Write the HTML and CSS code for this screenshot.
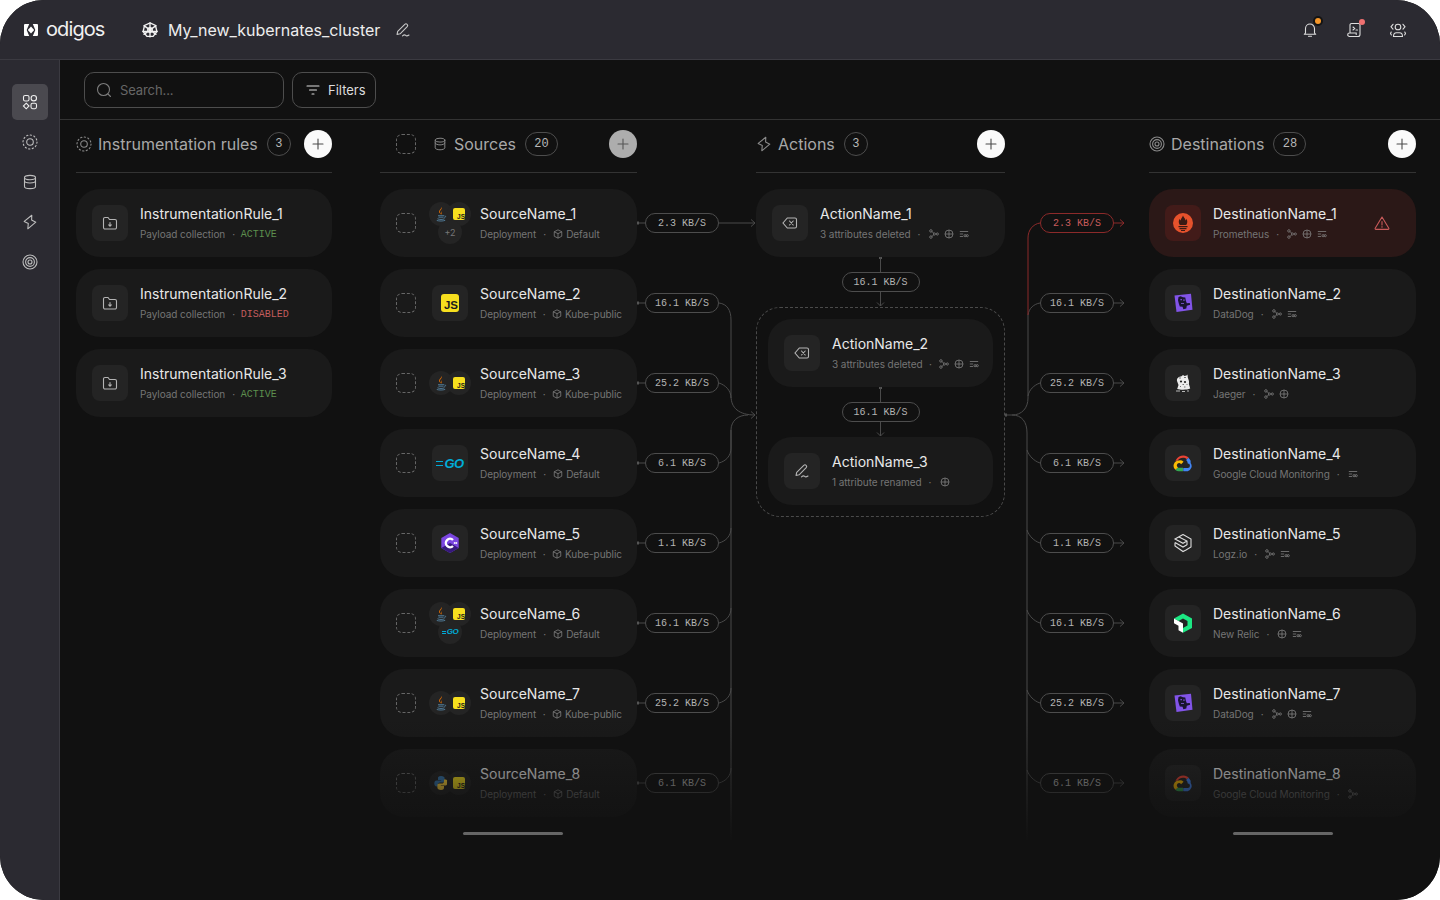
FILE: index.html
```html
<!DOCTYPE html>
<html lang="en">
<head>
<meta charset="utf-8">
<title>Odigos</title>
<link rel="stylesheet" href="styles.css">
</head>
<body>
<svg class="defs" xmlns="http://www.w3.org/2000/svg">
  <symbol id="i-overview" viewBox="0 0 16 16"><rect x="1.5" y="1.5" width="5.5" height="5.5" rx="1.6"/><circle cx="11.8" cy="4.2" r="2.7"/><path d="M4.2 9.2 7 12 4.2 14.8 1.4 12Z"/><rect x="9" y="9.2" width="5.5" height="5.5" rx="1.6"/></symbol>
  <symbol id="i-rule" viewBox="0 0 16 16"><circle cx="8" cy="8" r="3.300"/><circle cx="8" cy="8" r="7" stroke-dasharray="1.300 2.370"/></symbol>
  <symbol id="i-db" viewBox="0 0 16 16"><ellipse cx="8" cy="3.6" rx="5.5" ry="2.2"/><path d="M2.5 3.6v8.8c0 1.2 2.5 2.2 5.5 2.2s5.500-1 5.500-2.200V3.600M2.500 6.800c0 1.200 2.500 2.200 5.500 2.200s5.500-1 5.500-2.200"/></symbol>
  <symbol id="i-bolt" viewBox="0 0 16 16"><path d="M9.800 1.200 2.200 7.400l4.100 2L5.800 14.800l8-6.600-4.200-2.100Z" stroke-linejoin="round"/></symbol>
  <symbol id="i-target" viewBox="0 0 16 16"><circle cx="8" cy="8" r="7"/><circle cx="8" cy="8" r="4.400"/><circle cx="8" cy="8" r="2"/></symbol>
  <symbol id="i-search" viewBox="0 0 16 16"><circle cx="7.500" cy="7.500" r="6"/><path d="m12 12 2.500 2.500"/></symbol>
  <symbol id="i-filter" viewBox="0 0 16 16"><path d="M2 4h12M4.500 8h7M7 12h2"/></symbol>
  <symbol id="i-plus" viewBox="0 0 16 16"><path d="M8 3v10M3 8h10"/></symbol>
  <symbol id="i-folder" viewBox="0 0 16 16"><path d="M1.500 4a1.500 1.500 0 0 1 1.500-1.500h3l1.500 2H13A1.500 1.500 0 0 1 14.500 6v6.500A1.500 1.500 0 0 1 13 14H3a1.500 1.500 0 0 1-1.500-1.500Z"/><path d="M8 7.500v3.500M6.700 9.900 8 11.200l1.300-1.300"/></symbol>
  <symbol id="i-back" viewBox="0 0 16 16"><path d="M5.300 3H13a1.500 1.500 0 0 1 1.500 1.500v7A1.500 1.500 0 0 1 13 13H5.300L1 8Z"/><path d="m7.500 6 3.700 4M11.200 6l-3.700 4"/></symbol>
  <symbol id="i-pen" viewBox="0 0 16 16"><path d="M2 12.500 2.700 9.400 9.800 2.300a1.700 1.700 0 0 1 2.400 2.400L5.100 11.800Z" stroke-linejoin="round"/><path d="M7.500 13.800c1.500-1.300 2.300-1.300 3.200-.4s1.800.6 3.300-.4"/></symbol>
  <symbol id="i-cube" viewBox="0 0 12 12"><path d="M6 1 10.500 3.300v5.400L6 11 1.500 8.700V3.300Z"/><path d="M1.500 3.300 6 5.600l4.500-2.300M6 5.600V11"/></symbol>
  <symbol id="i-trace" viewBox="0 0 12 12"><circle cx="2.300" cy="2.300" r="1.500"/><circle cx="2.300" cy="9.700" r="1.500"/><circle cx="6.500" cy="6" r="1.300"/><circle cx="10" cy="6" r="1.300"/><path d="M3.700 3 5.500 5M3.700 9 5.500 7"/></symbol>
  <symbol id="i-globe" viewBox="0 0 12 12"><circle cx="6" cy="6" r="4.800"/><path d="M1.200 6h9.600M6 1.200v9.600"/></symbol>
  <symbol id="i-slide" viewBox="0 0 12 12"><path d="M1 3h10M1 6h4M1 9h4"/><circle cx="7.300" cy="8" r="1.300"/><circle cx="9.900" cy="8" r="1.300"/></symbol>
  <symbol id="i-warn" viewBox="0 0 16 16"><path d="M8 2 14.800 13.200a.8.800 0 0 1-.7 1.200H1.900a.8.800 0 0 1-.7-1.200Z" stroke-linejoin="round"/><path d="M8 6.500v3.500M8 11.600v.6"/></symbol>
  <symbol id="i-bell" viewBox="0 0 16 16"><path d="M3.500 11V6.500a4.500 4.500 0 0 1 9 0V11l1.200 1.300H2.300Z" stroke-linejoin="round"/><path d="M6.500 14.300h3"/></symbol>
  <symbol id="i-script" viewBox="0 0 16 16"><path d="M4 11V3a1.500 1.500 0 0 1 1.500-1.500h7A1.500 1.500 0 0 1 14 3v9.500a2 2 0 0 1-2 2H3.500A1.800 1.800 0 0 1 1.700 12.700c0-1 .8-1.700 1.800-1.700h6.700v1.500"/><path d="m7 5 1.700 1.500L7 8M10 8h1.500"/></symbol>
  <symbol id="i-users" viewBox="0 0 16 16"><circle cx="8" cy="5" r="2.800"/><path d="M3.500 14.500c0-2.500 1.500-3.700 3-3.700h3c1.500 0 3 1.200 3 3.700Z"/><path d="M3 2.300 1 4.800l2 2.400M13 2.300l2 2.500-2 2.400M1.200 10 .5 11.500l.9 1.500M14.800 10l.7 1.500-.9 1.500"/></symbol>
  <symbol id="i-helm" viewBox="0 0 16 16"><path d="M8 .9 13.500 3.500 14.900 9.500 11.100 14.300H4.900L1.100 9.500 2.500 3.500Z"/><circle cx="8" cy="8" r="2.300"/><path d="M8 .9v14M2 3.600l12 8.800M14 3.600 2 12.400M.9 9.500h14.200"/></symbol>
  <symbol id="i-logo" viewBox="0 0 14 12"><path fill-rule="evenodd" d="M1 0H5.200L2.700 6 5.200 12H1A1 1 0 0 1 0 11V1A1 1 0 0 1 1 0ZM8.800 0H13a1 1 0 0 1 1 1v10a1 1 0 0 1-1 1H8.800l2.500-6ZM7 2.500 10.200 6 7 9.500 3.800 6Z"/></symbol>
  <symbol id="l-java" viewBox="0 0 16 16"><path d="M8.700 1C9.800 3 6.800 4 7 6c.1 1 1 1.500 1 2.500-.8-.8-2.400-1.700-1.800-3.500C6.700 3.500 8.600 2.800 8.700 1Z" fill="#e76f00"/><path d="M10.500 4c-1.500 1-2.400 1.600-1.600 3.200.3.600 0 1.200-.6 1.500.8-1.300-.9-2 .2-3.300.5-.6 1.200-.9 2-1.400Z" fill="#e76f00"/><path d="M5 9.700h6M5.500 11.200h5M4.500 12.800c2 .9 5 .9 7 0M11.500 10c1.500-.3 1.500 1.300-.2 1.700M3.800 14.500c2.500.7 6 .7 8.400-.1" fill="none" stroke="#5382a1" stroke-width=".9"/></symbol>
  <symbol id="l-python" viewBox="0 0 16 16"><path d="M8 1C5.500 1 5 2 5 3.200V5h3.200v.6H3.500C2.200 5.600 1.300 6.800 1.300 8.500s.9 2.900 2.200 2.900H5V9.500c0-1.200 1-2.100 2.200-2.100h2.700c1 0 1.700-.8 1.700-1.800V3.200C11.600 2 10.400 1 8 1Z" fill="#3776ab"/><path d="M8 15c2.500 0 3-1 3-2.200V11H7.800v-.6h4.700c1.300 0 2.200-1.200 2.200-2.900s-.9-2.900-2.200-2.900H11v1.900c0 1.200-1 2.100-2.200 2.100H6.100c-1 0-1.700.8-1.700 1.800v2.400C4.400 14 5.600 15 8 15Z" fill="#ffd43b"/></symbol>
  <symbol id="l-cs" viewBox="0 0 20 20"><path d="M10 0 18.700 5v10L10 20 1.300 15V5Z" fill="#7b46e0"/><path d="M10 10 18.700 15 10 20 1.300 15Z" fill="#36197a"/><path d="M13 7a4.200 4.200 0 1 0 0 6" fill="none" stroke="#fff" stroke-width="2.400"/><path d="M14.500 9v2M16.500 9v2M13.800 9.500h3.400M13.800 10.500h3.400" stroke="#fff" stroke-width=".6"/></symbol>
  <symbol id="l-dd" viewBox="0 0 20 20"><path d="M1.500 2.500 18 .8 19.500 16.800 3.500 19Z" fill="#8254e8"/><path d="M5.500 4 7.500 3.200 10 4.200l2.300.3.500 3 1 2.700 3-.3.300 1.800-3.300 1-.5 2.800-3 .8-.7-2.600-2.800-.3-1-3-.8-3.200Z" fill="#191530"/><path d="M7.500 6h1.300v1.300H7.500ZM10.300 6.500h1.300v1.300h-1.300ZM8 10h3v.8H8Z" fill="#8a60ea"/></symbol>
  <symbol id="l-jaeger" viewBox="0 0 20 20"><path d="M4 8C3.500 5 6 3.500 8.500 3.200L10 2l1.500 1 2-.5 1 -1 .3 3 1 3c.4 1.200.2 2.500.1 3.500l1.300 4.500c-3 1.500-9.500 1.500-13 .5L5.500 12Z" fill="#ececec"/><circle cx="8" cy="8.500" r="1.100" fill="#222"/><circle cx="12" cy="9" r="1.100" fill="#222"/><path d="M6 5h2M11 4.500h2M9.500 11.500h1.500M7 13.500h1M11 14h1.500M13.500 11.500h1" stroke="#555" stroke-width=".8"/><path d="M3 18h4M9 18.500h3M14 18h2" stroke="#ddd" stroke-width=".8"/></symbol>
  <symbol id="l-gcp" viewBox="1 .5 17.800 14.500"><path d="M13.300 4.500 15 2.800A7.400 7.400 0 0 0 3.200 6l2.200-.4c1-2.400 5.500-3.500 7.900-1.100Z" fill="#ea4335"/><path d="M16.700 5.700a7.300 7.300 0 0 0-2-2.700l-2 2a3.700 3.700 0 0 1 1.400 3v.3a2 2 0 0 1 0 4h-3.700l-.3.400v2l.3.300h3.700a4.700 4.700 0 0 0 2.600-7.300Z" fill="#4285f4"/><path d="M6.200 15h3.700v-3H6.200a2 2 0 0 1-.8-.2l-.6.100-1.500 1.500-.1.500A4.700 4.700 0 0 0 6.200 15Z" fill="#34a853"/><path d="M6.200 5.500a4.700 4.700 0 0 0-3 8.300l2.300-2.200a2 2 0 1 1 2.700-2.700l2.200-2.300a4.700 4.700 0 0 0-4.200-1.100Z" fill="#fbbc05"/></symbol>
  <symbol id="l-logz" viewBox="0 0 20 20"><path d="M10 1.500 18 6v8l-5 3M10 1.500 2 6l8 4.300 4-2.300M2 9.500l8 4.500 4-2.300M2 9.500V13l8 5.500 3-1.500M6 4l8 4v4" fill="none" stroke="#ddd" stroke-width="1.100"/></symbol>
  <symbol id="l-nr" viewBox="0 0 20 20"><path d="M10 .5 19 5.500V15L10 19.800V15L14.500 12.500V8L10 5.500 5.500 8 1 5.500Z" fill="#1ce783"/><path d="M1 5.500 10 10.500V19.800L5.500 17.200V12.800L1 10.300Z" fill="#fff"/></symbol>
  <symbol id="l-prom" viewBox="0 0 20 20"><circle cx="10" cy="10" r="10" fill="#e6522c"/><path d="M10 2.500c.5 2 2.500 2.800 2.500 5 .6-.5.800-1.100.9-1.800 1.200 2 1.300 4-.2 6.300H6.800C5.300 9.700 5.500 7.800 6.700 5.800c.1.800.3 1.300.9 1.800C7.700 5.500 9.500 4.500 10 2.500Z" fill="#3a1a14"/><path d="M5.500 13h9v1.200h-9ZM6.500 15h7v1.200h-7ZM8 17h4v1H8Z" fill="#3a1a14"/></symbol>
</svg>

<div class="app">
  <header class="topbar">
    <div class="brand"><svg class="brand-mark"><use href="#i-logo"/></svg><span class="brand-name">odigos</span></div>
    <svg class="ico helm"><use href="#i-helm"/></svg>
    <span class="cluster">My_new_kubernates_cluster</span>
    <svg class="ico edit"><use href="#i-pen"/></svg>
    <div class="top-actions">
      <span class="top-btn"><svg class="ico"><use href="#i-bell"/></svg><i class="badge badge-orange"></i></span>
      <span class="top-btn"><svg class="ico"><use href="#i-script"/></svg><i class="badge badge-red"></i></span>
      <span class="top-btn"><svg class="ico"><use href="#i-users"/></svg></span>
    </div>
  </header>

  <nav class="sidebar">
    <span class="nav-btn active"><svg class="ico"><use href="#i-overview"/></svg></span>
    <span class="nav-btn"><svg class="ico"><use href="#i-rule"/></svg></span>
    <span class="nav-btn"><svg class="ico"><use href="#i-db"/></svg></span>
    <span class="nav-btn"><svg class="ico"><use href="#i-bolt"/></svg></span>
    <span class="nav-btn"><svg class="ico"><use href="#i-target"/></svg></span>
  </nav>

  <main class="main">
    <div class="toolbar">
      <div class="search"><svg class="ico"><use href="#i-search"/></svg><span>Search...</span></div>
      <div class="filters"><svg class="ico"><use href="#i-filter"/></svg><span>Filters</span></div>
    </div>

    <div class="board">
      <svg class="wires" viewBox="60 120 1380 780" xmlns="http://www.w3.org/2000/svg">
        <path d="M637 223H645M637 303H645M637 383H645M637 463H645M637 543H645M637 623H645M637 703H645M637 783H645"/>
        <path class="cap" d="M637 223h2M637 303h2M637 383h2M637 463h2M637 543h2M637 623h2M637 703h2M637 783h2M1005 415h2M880.500 257v2M880.500 387v2"/>
        <path d="M719 223H755M751 219.500l4 3.500-4 3.500"/>
        <path d="M719 303C727 304 731 310 731 320V396C731 408 739 415 755 415M751 411.500l4 3.500-4 3.500"/>
        <path d="M719 383C725 385 731 390 731 398"/>
        <path d="M719 463C726 461 731 456 731 448V430C731 421 738 415 748 415"/>
        <path d="M719 543C726 541 731 536 731 528M719 623C726 621 731 616 731 608M719 703C726 701 731 696 731 688M719 783C726 781 731 776 731 768"/>
        <path d="M731 840V430"/>
        <path d="M880.500 257V272M880.500 292V306M877 302.500l3.500 3.500 3.500-3.500M880.500 387V402M880.500 422V436M877 432.500l3.500 3.500 3.500-3.500"/>
        <path d="M1005 415H1012C1022 415 1028 408 1028 398V315C1029 308 1034 304 1040 303M1028 396C1029 390 1034 385 1040 383"/>
        <path d="M1012 415C1022 415 1027 422 1027 433V840"/>
        <path d="M1027 450C1029 456 1034 461 1040 463M1027 530C1029 536 1034 541 1040 543M1027 610C1029 616 1034 621 1040 623M1027 690C1029 696 1034 701 1040 703M1027 770C1029 776 1034 781 1040 783"/>
        <path d="M1114 303H1124M1120 299.500l4 3.500-4 3.500M1114 383H1124M1120 379.500l4 3.500-4 3.500M1114 463H1124M1120 459.500l4 3.500-4 3.500M1114 543H1124M1120 539.500l4 3.500-4 3.500M1114 623H1124M1120 619.500l4 3.500-4 3.500M1114 703H1124M1120 699.500l4 3.500-4 3.500M1114 783H1124M1120 779.500l4 3.500-4 3.500"/>
        <path class="red" d="M1028 315V238C1028 230 1033 224 1040 223M1114 223H1124M1120 219.500l4 3.500-4 3.500"/>
      </svg>

      <section class="col col-rules">
        <div class="col-head">
          <svg class="ico head-ico"><use href="#i-rule"/></svg><h2>Instrumentation rules</h2><span class="count">3</span>
          <span class="add"><svg class="ico"><use href="#i-plus"/></svg></span>
        </div>
        <div class="cards">
          <article class="card"><span class="tile"><svg class="ico"><use href="#i-folder"/></svg></span><div class="body"><div class="name">InstrumentationRule_1</div><div class="sub">Payload collection<i class="dot">·</i><span class="status ok">ACTIVE</span></div></div></article>
          <article class="card"><span class="tile"><svg class="ico"><use href="#i-folder"/></svg></span><div class="body"><div class="name">InstrumentationRule_2</div><div class="sub">Payload collection<i class="dot">·</i><span class="status off">DISABLED</span></div></div></article>
          <article class="card"><span class="tile"><svg class="ico"><use href="#i-folder"/></svg></span><div class="body"><div class="name">InstrumentationRule_3</div><div class="sub">Payload collection<i class="dot">·</i><span class="status ok">ACTIVE</span></div></div></article>
        </div>
      </section>

      <section class="col col-sources">
        <div class="col-head head-check">
          <span class="check"></span><svg class="ico head-ico small"><use href="#i-db"/></svg><h2>Sources</h2><span class="count wide">20</span>
          <span class="add add-muted"><svg class="ico"><use href="#i-plus"/></svg></span>
        </div>
        <div class="cards">
          <article class="card"><span class="check"></span><span class="stack"><span class="bubble"><svg class="logo16"><use href="#l-java"/></svg></span><span class="bubble"><span class="js js-s">JS</span></span><span class="bubble more">+2</span></span><div class="body"><div class="name">SourceName_1</div><div class="sub">Deployment<i class="dot">·</i><svg class="mi"><use href="#i-cube"/></svg><span class="ns">Default</span></div></div></article>
          <article class="card"><span class="check"></span><span class="tile"><span class="js">JS</span></span><div class="body"><div class="name">SourceName_2</div><div class="sub">Deployment<i class="dot">·</i><svg class="mi"><use href="#i-cube"/></svg><span class="ns">Kube-public</span></div></div></article>
          <article class="card"><span class="check"></span><span class="stack"><span class="bubble"><svg class="logo16"><use href="#l-java"/></svg></span><span class="bubble"><span class="js js-s">JS</span></span></span><div class="body"><div class="name">SourceName_3</div><div class="sub">Deployment<i class="dot">·</i><svg class="mi"><use href="#i-cube"/></svg><span class="ns">Kube-public</span></div></div></article>
          <article class="card"><span class="check"></span><span class="tile"><span class="go"><span class="go-lines"></span>GO</span></span><div class="body"><div class="name">SourceName_4</div><div class="sub">Deployment<i class="dot">·</i><svg class="mi"><use href="#i-cube"/></svg><span class="ns">Default</span></div></div></article>
          <article class="card"><span class="check"></span><span class="tile"><svg class="logo20"><use href="#l-cs"/></svg></span><div class="body"><div class="name">SourceName_5</div><div class="sub">Deployment<i class="dot">·</i><svg class="mi"><use href="#i-cube"/></svg><span class="ns">Kube-public</span></div></div></article>
          <article class="card"><span class="check"></span><span class="stack"><span class="bubble"><svg class="logo16"><use href="#l-java"/></svg></span><span class="bubble"><span class="js js-s">JS</span></span><span class="bubble"><span class="go go-s"><span class="go-lines"></span>GO</span></span></span><div class="body"><div class="name">SourceName_6</div><div class="sub">Deployment<i class="dot">·</i><svg class="mi"><use href="#i-cube"/></svg><span class="ns">Default</span></div></div></article>
          <article class="card"><span class="check"></span><span class="stack"><span class="bubble"><svg class="logo16"><use href="#l-java"/></svg></span><span class="bubble"><span class="js js-s">JS</span></span></span><div class="body"><div class="name">SourceName_7</div><div class="sub">Deployment<i class="dot">·</i><svg class="mi"><use href="#i-cube"/></svg><span class="ns">Kube-public</span></div></div></article>
          <article class="card"><span class="check"></span><span class="stack"><span class="bubble"><svg class="logo16"><use href="#l-python"/></svg></span><span class="bubble"><span class="js js-s">JS</span></span></span><div class="body"><div class="name">SourceName_8</div><div class="sub">Deployment<i class="dot">·</i><svg class="mi"><use href="#i-cube"/></svg><span class="ns">Default</span></div></div></article>
        </div>
        <div class="thumb thumb-src"></div>
      </section>

      <div class="flow flow-in">
        <div class="flow-row"><span class="pill">2.3 KB/S</span></div>
        <div class="flow-row"><span class="pill">16.1 KB/S</span></div>
        <div class="flow-row"><span class="pill">25.2 KB/S</span></div>
        <div class="flow-row"><span class="pill">6.1 KB/S</span></div>
        <div class="flow-row"><span class="pill">1.1 KB/S</span></div>
        <div class="flow-row"><span class="pill">16.1 KB/S</span></div>
        <div class="flow-row"><span class="pill">25.2 KB/S</span></div>
        <div class="flow-row"><span class="pill">6.1 KB/S</span></div>
      </div>

      <section class="col col-actions">
        <div class="col-head">
          <svg class="ico head-ico"><use href="#i-bolt"/></svg><h2>Actions</h2><span class="count">3</span>
          <span class="add"><svg class="ico"><use href="#i-plus"/></svg></span>
        </div>
        <div class="action-stack">
          <article class="card"><span class="tile"><svg class="ico"><use href="#i-back"/></svg></span><div class="body"><div class="name">ActionName_1</div><div class="sub">3 attributes deleted<i class="dot">·</i><span class="signals"><svg class="mi"><use href="#i-trace"/></svg><svg class="mi"><use href="#i-globe"/></svg><svg class="mi"><use href="#i-slide"/></svg></span></div></div></article>
          <div class="v-link v-link-top"><span class="pill pill-v">16.1 KB/S</span></div>
          <div class="group">
            <article class="card"><span class="tile"><svg class="ico"><use href="#i-back"/></svg></span><div class="body"><div class="name">ActionName_2</div><div class="sub">3 attributes deleted<i class="dot">·</i><span class="signals"><svg class="mi"><use href="#i-trace"/></svg><svg class="mi"><use href="#i-globe"/></svg><svg class="mi"><use href="#i-slide"/></svg></span></div></div></article>
            <div class="v-link"><span class="pill pill-v">16.1 KB/S</span></div>
            <article class="card"><span class="tile"><svg class="ico"><use href="#i-pen"/></svg></span><div class="body"><div class="name">ActionName_3</div><div class="sub">1 attribute renamed<i class="dot">·</i><span class="signals"><svg class="mi"><use href="#i-globe"/></svg></span></div></div></article>
          </div>
        </div>
      </section>

      <div class="flow flow-out">
        <div class="flow-row"><span class="pill pill-red">2.3 KB/S</span></div>
        <div class="flow-row"><span class="pill">16.1 KB/S</span></div>
        <div class="flow-row"><span class="pill">25.2 KB/S</span></div>
        <div class="flow-row"><span class="pill">6.1 KB/S</span></div>
        <div class="flow-row"><span class="pill">1.1 KB/S</span></div>
        <div class="flow-row"><span class="pill">16.1 KB/S</span></div>
        <div class="flow-row"><span class="pill">25.2 KB/S</span></div>
        <div class="flow-row"><span class="pill">6.1 KB/S</span></div>
      </div>

      <section class="col col-dest">
        <div class="col-head">
          <svg class="ico head-ico"><use href="#i-target"/></svg><h2>Destinations</h2><span class="count wide">28</span>
          <span class="add"><svg class="ico"><use href="#i-plus"/></svg></span>
        </div>
        <div class="cards">
          <article class="card card-error"><span class="tile"><svg class="logo20"><use href="#l-prom"/></svg></span><div class="body"><div class="name">DestinationName_1</div><div class="sub">Prometheus<i class="dot">·</i><span class="signals"><svg class="mi"><use href="#i-trace"/></svg><svg class="mi"><use href="#i-globe"/></svg><svg class="mi"><use href="#i-slide"/></svg></span></div></div><svg class="ico warn"><use href="#i-warn"/></svg></article>
          <article class="card"><span class="tile"><svg class="logo20"><use href="#l-dd"/></svg></span><div class="body"><div class="name">DestinationName_2</div><div class="sub">DataDog<i class="dot">·</i><span class="signals"><svg class="mi"><use href="#i-trace"/></svg><svg class="mi"><use href="#i-slide"/></svg></span></div></div></article>
          <article class="card"><span class="tile"><svg class="logo20"><use href="#l-jaeger"/></svg></span><div class="body"><div class="name">DestinationName_3</div><div class="sub">Jaeger<i class="dot">·</i><span class="signals"><svg class="mi"><use href="#i-trace"/></svg><svg class="mi"><use href="#i-globe"/></svg></span></div></div></article>
          <article class="card"><span class="tile"><svg class="logo20"><use href="#l-gcp"/></svg></span><div class="body"><div class="name">DestinationName_4</div><div class="sub">Google Cloud Monitoring<i class="dot">·</i><span class="signals"><svg class="mi"><use href="#i-slide"/></svg></span></div></div></article>
          <article class="card"><span class="tile"><svg class="logo20"><use href="#l-logz"/></svg></span><div class="body"><div class="name">DestinationName_5</div><div class="sub">Logz.io<i class="dot">·</i><span class="signals"><svg class="mi"><use href="#i-trace"/></svg><svg class="mi"><use href="#i-slide"/></svg></span></div></div></article>
          <article class="card"><span class="tile"><svg class="logo20"><use href="#l-nr"/></svg></span><div class="body"><div class="name">DestinationName_6</div><div class="sub">New Relic<i class="dot">·</i><span class="signals"><svg class="mi"><use href="#i-globe"/></svg><svg class="mi"><use href="#i-slide"/></svg></span></div></div></article>
          <article class="card"><span class="tile"><svg class="logo20"><use href="#l-dd"/></svg></span><div class="body"><div class="name">DestinationName_7</div><div class="sub">DataDog<i class="dot">·</i><span class="signals"><svg class="mi"><use href="#i-trace"/></svg><svg class="mi"><use href="#i-globe"/></svg><svg class="mi"><use href="#i-slide"/></svg></span></div></div></article>
          <article class="card"><span class="tile"><svg class="logo20"><use href="#l-gcp"/></svg></span><div class="body"><div class="name">DestinationName_8</div><div class="sub">Google Cloud Monitoring<i class="dot">·</i><span class="signals"><svg class="mi"><use href="#i-trace"/></svg></span></div></div></article>
        </div>
        <div class="thumb thumb-dest"></div>
      </section>

      <div class="fade"></div>
    </div>
  </main>
</div>
</body>
</html>
```
FILE: styles.css
```css
* { box-sizing: border-box; }
html, body { margin: 0; height: 100%; background: #fff; }
body { font-family: Inter, "Noto Sans", sans-serif; color: #e6e6e6; overflow: hidden; }
h2 { margin: 0; font-weight: 400; }
i { font-style: normal; }
.defs { position: absolute; width: 0; height: 0; }
.ico { width: 16px; height: 16px; flex: none; fill: none; stroke: currentColor; stroke-width: 1.1; stroke-linecap: round; }

.app {
  width: 1440px; height: 900px; border-radius: 44px; overflow: hidden;
  display: grid; grid-template: 60px 1fr / 60px 1fr; background: #111;
}

.topbar {
  grid-column: 1 / -1; display: flex; align-items: center; padding: 0 24px;
  background: #2b2a31; border-bottom: 1px solid #3b3a41;
}
.brand { display: flex; align-items: center; gap: 8px; width: 118px; }
.brand-mark { width: 14px; height: 12px; fill: #fff; }
.brand-name { font-size: 20px; letter-spacing: -0.9px; color: #f0f0f0; line-height: 24px; margin-top: -2px; }
.helm { color: #f2f2f2; margin-right: 10px; stroke-width: 1.35; }
.cluster { font-size: 16px; letter-spacing: -0.03px; color: #ededed; }
.edit { margin-left: 15px; color: #c8c8c8; }
.top-actions { margin-left: auto; display: flex; gap: 24px; margin-right: 8px; }
.top-btn { position: relative; width: 20px; height: 20px; display: flex; align-items: center; justify-content: center; color: #ddd; }
.badge { position: absolute; width: 6px; height: 6px; border-radius: 50%; }
.badge-orange { background: #f5962a; top: -2px; right: -1px; box-shadow: 0 0 0 2px #141414; }
.badge-red { background: #ef7070; top: -1px; right: -1px; }

.sidebar {
  background: #2b2a31; border-right: 1px solid #3b3a41; padding: 24px 11px 0 12px;
  display: flex; flex-direction: column; gap: 4px;
}
.nav-btn { width: 36px; height: 36px; border-radius: 5px; display: flex; align-items: center; justify-content: center; color: #bdbdbd; }
.nav-btn.active { background: #4a494f; color: #eee; }

.main { min-width: 0; display: flex; flex-direction: column; background: #111; }
.toolbar { height: 60px; display: flex; align-items: center; gap: 8px; padding: 0 24px; border-bottom: 1px solid #333; }
.search, .filters { height: 36px; border: 1px solid #4d4d4d; border-radius: 10px; display: flex; align-items: center; font-size: 13px; }
.search { width: 200px; padding-left: 11px; gap: 8px; color: #666; letter-spacing: -0.1px; }
.search .ico { color: #7c7c7c; }
.filters { width: 84px; padding-left: 12px; gap: 7px; color: #ddd; }

.board { position: relative; flex: 1; display: flex; padding-left: 16px; overflow: hidden; }
.wires { position: absolute; left: 0; top: 0; width: 1380px; height: 780px; fill: none; stroke: #4a4a4a; stroke-width: 1; pointer-events: none; }
.wires .red { stroke: #8c2a2a; }
.wires .cap { stroke-width: 3; stroke: #555; }

.col { position: relative; flex: none; }
.col-rules { width: 256px; margin-right: 48px; }
.col-sources { width: 257px; }
.col-actions { width: 249px; }
.col-dest { width: 267px; }

.col-head { height: 53px; padding-bottom: 5px; display: flex; align-items: center; border-bottom: 1px solid #333; margin-bottom: 16px; color: #a6a6a6; }
.col-head h2 { font-size: 16px; margin-left: 6px; color: #a8a8a8; }
.head-ico { color: #8a8a8a; }
.head-check { padding-left: 16px; }
.head-check .check { margin-right: 17px; }
.head-check h2 { margin-left: 7px; }
.head-ico.small { width: 14px; height: 14px; }
.count {
  width: 24px; height: 24px; margin-left: 9px; border: 1px solid #4d4d4d; border-radius: 12px;
  display: flex; align-items: center; justify-content: center;
  font: 12px "Liberation Mono", monospace; color: #b8b8b8;
}
.count.wide { width: 33px; }
.add { margin-left: auto; width: 28px; height: 28px; border-radius: 50%; background: #fafafa; color: #4a4a4a; display: flex; align-items: center; justify-content: center; }
.add-muted { background: #adadad; color: #565656; }

.cards { display: flex; flex-direction: column; gap: 12px; }
.card { height: 68px; border-radius: 24px; background: #1a1a1a; display: flex; align-items: center; padding: 0 16px; flex: none; }
.card-error { background: #2b1817; }
.card-error .tile { background: #421b19; }
.tile { width: 36px; height: 36px; flex: none; border-radius: 8px; background: #242424; display: flex; align-items: center; justify-content: center; color: #b4b4b4; margin-right: 12px; }
.body { min-width: 0; flex: 1; display: flex; flex-direction: column; gap: 2px; }
.name { font-size: 14px; line-height: 20px; color: #e8e8e8; white-space: nowrap; }
.sub { font-size: 10px; line-height: 16px; letter-spacing: -0.06px; color: #757575; display: flex; align-items: center; white-space: nowrap; }
.dot { margin: 0 6.5px; width: 4px; text-align: center; }
.status { font-family: "Liberation Mono", monospace; font-size: 10px; letter-spacing: 0; margin: 1px 0 0 -1.5px; }
.status.ok { color: #5d8f4e; }
.status.off { color: #c25d5d; }
.mi { width: 10px; height: 10px; flex: none; fill: none; stroke: currentColor; stroke-width: .85; color: #8c8c8c; }
.ns { margin-left: 3px; }
.signals { display: flex; align-items: center; gap: 5px; margin-left: 1px; }
.warn { color: #c85a5a; margin: 0 10px 0 8px; }

.check { width: 20px; height: 20px; flex: none; border: 1px dashed #666; border-radius: 6px; }
.col-sources .card .check { margin-right: 16px; }

.stack { width: 42px; margin: 0 9px 0 -3px; display: flex; flex-wrap: wrap; justify-content: center; flex: none; }
.bubble { width: 24px; height: 24px; border-radius: 50%; background: #242424; display: flex; align-items: center; justify-content: center; position: relative; font-size: 9px; color: #777; }
.bubble:nth-child(2) { margin-left: -6px; }
.bubble:nth-child(3) { margin-top: -6px; }
.logo16 { width: 16px; height: 16px; }
.logo20 { width: 20px; height: 20px; }
.js { width: 18px; height: 18px; border-radius: 3px; background: #f7df1e; color: #1c1c1c; font: 700 11.5px/11px "Liberation Sans", sans-serif; display: flex; align-items: flex-end; justify-content: flex-end; padding: 0 1px 1px 0; }
.js-s { width: 12px; height: 12px; font-size: 6.5px; line-height: 6.5px; border-radius: 2px; padding: 0; }
.go { font: italic 900 13px/13px "Liberation Sans", sans-serif; color: #00acd7; display: flex; align-items: center; gap: 1px; letter-spacing: -.5px; }
.go-s { font-size: 8px; line-height: 8px; }
.go-lines { width: 7px; height: 5px; border-top: 1px solid #00acd7; border-bottom: 1px solid #00acd7; }
.go-s .go-lines { width: 4px; height: 3px; }

.flow { flex: none; padding-top: 69px; display: flex; flex-direction: column; gap: 12px; position: relative; }
.flow-in { width: 119px; padding-left: 8px; }
.flow-out { width: 144px; padding-left: 35px; }
.flow-row { height: 68px; display: flex; align-items: center; }
.pill {
  position: relative; width: 74px; height: 20px; border: 1px solid #4d4d4d; border-radius: 10px; background: #111;
  display: flex; align-items: center; justify-content: center;
  font: 10px "Liberation Mono", monospace; color: #b4b4b4; flex: none;
}
.pill-red { border-color: #8c2a2a; color: #c85c5c; }
.pill-v { width: 78px; }

.action-stack { display: flex; flex-direction: column; }
.v-link { height: 50px; display: flex; align-items: center; justify-content: center; }
.group { height: 210px; border: 1px dashed #4a4a4a; border-radius: 24px; padding: 11px; display: flex; flex-direction: column; }
.group .card { height: 68px; }

.thumb { position: absolute; top: 712px; width: 100px; height: 3px; border-radius: 2px; background: #666; z-index: 3; }
.thumb-src { left: 83px; }
.thumb-dest { left: 84px; }
.fade { position: absolute; left: 0; right: 0; top: 600px; height: 122px; background: linear-gradient(to bottom, rgba(17,17,17,0), #111); z-index: 2; pointer-events: none; }
```
